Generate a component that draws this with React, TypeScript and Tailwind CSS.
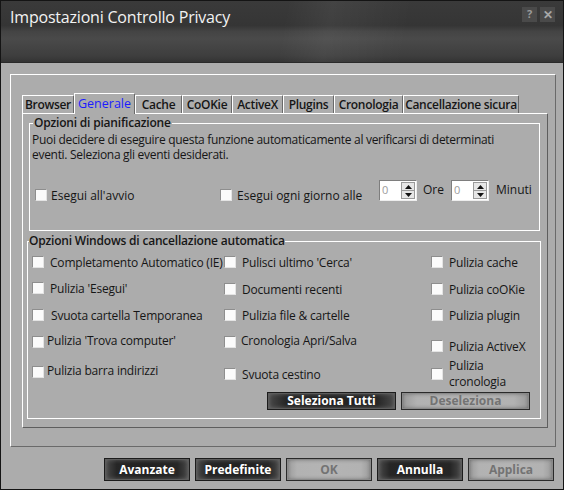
import React from "react";

const tabs = [
  { label: "Browser", w: "w-[52px]" },
  { label: "Generale", w: "w-[61px]", active: true },
  { label: "Cache", w: "w-[47px]" },
  { label: "CoOKie", w: "w-[50px]" },
  { label: "ActiveX", w: "w-[51px]" },
  { label: "Plugins", w: "w-[51px]" },
  { label: "Cronologia", w: "w-[69px]" },
  { label: "Cancellazione sicura", w: "w-[116px]" },
];

function Box() {
  return (
    <span className="block w-[12px] h-[12px] shrink-0 bg-[#fbfbfb] border border-t-[#8e8e8e] border-l-[#8e8e8e] border-r-[#e4e4e4] border-b-[#e4e4e4]" />
  );
}

function Check({
  label,
  className = "",
  textClass = "ml-[6px] leading-[15px]",
}: {
  label: React.ReactNode;
  className?: string;
  textClass?: string;
}) {
  return (
    <div className={`flex items-center h-[16px] ${className}`}>
      <Box />
      <span className={`whitespace-nowrap ${textClass}`}>{label}</span>
    </div>
  );
}

function Spin() {
  return (
    <div className="flex w-[38px] h-[21px] bg-white border border-t-[#7e7e7e] border-l-[#7e7e7e] border-r-[#ededed] border-b-[#ededed]">
      <span className="flex-1 pl-[2px] text-[11px] leading-[17px] text-[#9c9c9c]">0</span>
      <div className="w-[14px] my-[1px] mr-[1px] flex flex-col border border-[#9a9a9a] bg-[#e6e6e6]">
        <div className="flex-1 flex items-center justify-center border-b border-[#9a9a9a]">
          <svg width="7" height="4" viewBox="0 0 7 4">
            <path d="M0 4 L3.5 0 L7 4 Z" fill="#111" />
          </svg>
        </div>
        <div className="flex-1 flex items-center justify-center">
          <svg width="7" height="4" viewBox="0 0 7 4">
            <path d="M0 0 L3.5 4 L7 0 Z" fill="#111" />
          </svg>
        </div>
      </div>
    </div>
  );
}

function DarkButton({ children, className = "" }: { children: React.ReactNode; className?: string }) {
  return (
    <button className={`flex items-center justify-center border border-[#1c1c1c] bg-[linear-gradient(90deg,#4a4a4a_0%,#262626_14%,#222_50%,#262626_86%,#4a4a4a_100%)] shadow-[inset_0_0_0_1px_#5c5c5c,inset_0_0_5px_#7a7a7a] text-white font-bold text-[12px] ${className}`}>
      {children}
    </button>
  );
}

function LightButton({ children, className = "" }: { children: React.ReactNode; className?: string }) {
  return (
    <button className={`flex items-center justify-center border border-[#2a2a2a] bg-[linear-gradient(90deg,#9a9a9a_0%,#b2b2b2_12%,#b4b4b4_50%,#b2b2b2_88%,#9a9a9a_100%)] shadow-[inset_0_0_0_1px_#8a8a8a,inset_0_0_4px_#5a5a5a] text-[#737373] font-bold text-[12px] ${className}`}>
      {children}
    </button>
  );
}

export default function App() {
  return (
    <div className="w-[564px] h-[490px] flex flex-col bg-[#acacac] border border-[#141414] overflow-hidden font-['Open_Sans','Noto_Sans',sans-serif] text-[12px] text-[#161616]">
      {/* title bar */}
      <div className="h-[62px] shrink-0 flex items-start justify-between border-b border-[#2a2a2a] bg-[linear-gradient(100deg,rgba(255,255,255,0)_0%,rgba(255,255,255,0)_50%,rgba(255,255,255,0.05)_58%,rgba(255,255,255,0)_72%),linear-gradient(180deg,#3a3a3a_0%,#353535_40%,#444_50%,#4a4a4a_62%,#3e3e3e_90%,#333_100%)]">
        <span className="pl-[9px] pt-[4px] text-[16px] text-[#f2f2f2] tracking-[-0.2px]">
          Impostazioni Controllo Privacy
        </span>
        <div className="flex gap-[3px] pt-[6px] pr-[8px]">
          <span className="w-[15px] h-[15px] flex items-center justify-center bg-[#4a4a4a] text-[#9a9a9a] text-[11px] font-bold">?</span>
          <span className="w-[15px] h-[15px] flex items-center justify-center bg-[#4a4a4a] text-[#a8a8a8] text-[12px] font-bold">✕</span>
        </div>
      </div>

      <div className="flex-1 flex flex-col px-[9px]">
        {/* outer panel */}
        <div className="mt-[11px] w-[546px] h-[373px] border-t border-l border-white border-r border-b border-r-[#6a6a6a] border-b-[#6a6a6a] pl-[11px] pt-[18px]">
          <div className="flex items-end h-[20px]">
            {tabs.map((t) =>
              t.active ? (
                <div
                  key={t.label}
                  className={`${t.w} h-[21px] relative z-10 -mb-[1px] flex items-center justify-center bg-[#acacac] border-t border-l border-white border-r border-r-[#6a6a6a] text-[#1b1bff] text-[12.5px]`}
                >
                  {t.label}
                </div>
              ) : (
                <div
                  key={t.label}
                  className={`${t.w} h-[18px] flex items-center justify-center bg-[#adadad] border-t border-l border-white border-r border-r-[#6a6a6a] font-semibold text-[12px] tracking-[-0.3px]`}
                >
                  {t.label}
                </div>
              )
            )}
          </div>

          {/* tab panel */}
          <div className="w-[526px] h-[315px] border-t border-l border-white border-r border-b border-r-[#5e5e5e] border-b-[#5e5e5e] pl-[6px] pt-[2px]">
            <fieldset className="w-[511px] h-[115px] border border-white">
              <legend className="ml-[3px] px-[1px] font-semibold leading-[14px] tracking-[-0.2px]">
                Opzioni di pianificazione
              </legend>
              <p className="w-[476px] pl-[2px] pt-[2px] leading-[15px] tracking-[-0.3px]">
                Puoi decidere di eseguire questa funzione automaticamente al verificarsi di determinati
                eventi. Seleziona gli eventi desiderati.
              </p>
              <div className="flex items-start mt-[18px]">
                <Check label="Esegui all'avvio" className="ml-[5px] mt-[7px] w-[185px]" textClass="ml-[4px] leading-[15px]" />
                <Check label="Esegui ogni giorno alle" className="mt-[7px] w-[159px]" textClass="ml-[5px] leading-[15px]" />
                <Spin />
                <span className="ml-[6px] mt-[2px] w-[28px] leading-[15px]">Ore</span>
                <Spin />
                <span className="ml-[7px] mt-[2px] leading-[15px]">Minuti</span>
              </div>
            </fieldset>

            <fieldset className="-ml-[2px] mt-[3px] w-[514px] h-[185px] border border-white">
              <legend className="ml-[1px] font-semibold leading-[14px] tracking-[-0.2px]">
                Opzioni Windows di cancellazione automatica
              </legend>
              <div className="flex h-[144px] pl-[4px] tracking-[-0.2px]">
                <div className="w-[192px] flex flex-col">
                  <Check label="Completamento Automatico (IE)" className="mt-[6px]" />
                  <Check label="Pulizia 'Esegui'" className="mt-[10px]" />
                  <Check label="Svuota cartella Temporanea" className="mt-[11px]" textClass="ml-[7px] leading-[15px]" />
                  <Check label="Pulizia 'Trova computer'" className="mt-[11px]" textClass="ml-[3px] -mt-[4px] leading-[15px]" />
                  <Check label="Pulizia barra indirizzi" className="mt-[14px]" textClass="ml-[3px] -mt-[4px] leading-[15px]" />
                </div>
                <div className="w-[207px] flex flex-col">
                  <Check label="Pulisci ultimo 'Cerca'" className="mt-[6px]" />
                  <Check label="Documenti recenti" className="mt-[11px]" />
                  <Check label="Pulizia file & cartelle" className="mt-[10px]" />
                  <Check label="Cronologia Apri/Salva" className="mt-[11px]" textClass="ml-[5px] -mt-[4px] leading-[15px]" />
                  <Check label="Svuota cestino" className="mt-[16px]" />
                </div>
                <div className="flex-1 flex flex-col">
                  <Check label="Pulizia cache" className="mt-[6px]" />
                  <Check label="Pulizia coOKie" className="mt-[11px]" />
                  <Check label="Pulizia plugin" className="mt-[10px]" />
                  <Check label="Pulizia ActiveX" className="mt-[15px]" textClass="ml-[6px] leading-[13px]" />
                  <Check
                    label={
                      <>
                        <span className="block">Pulizia</span>
                        <span className="block">cronologia</span>
                      </>
                    }
                    className="mt-[12px]"
                    textClass="ml-[6px] leading-[16px]"
                  />
                </div>
              </div>
              <div className="flex justify-end gap-[5px] pr-[10px]">
                <DarkButton className="w-[129px] h-[18px]">Seleziona Tutti</DarkButton>
                <LightButton className="w-[129px] h-[18px]">Deseleziona</LightButton>
              </div>
            </fieldset>
          </div>
        </div>

        {/* bottom buttons */}
        <div className="mt-[11px] flex gap-[5px] pl-[94px]">
          <DarkButton className="w-[86px] h-[23px]">Avanzate</DarkButton>
          <DarkButton className="w-[86px] h-[23px]">Predefinite</DarkButton>
          <LightButton className="w-[86px] h-[23px]">OK</LightButton>
          <DarkButton className="w-[86px] h-[23px]">Annulla</DarkButton>
          <LightButton className="w-[86px] h-[23px]">Applica</LightButton>
        </div>
      </div>
    </div>
  );
}
